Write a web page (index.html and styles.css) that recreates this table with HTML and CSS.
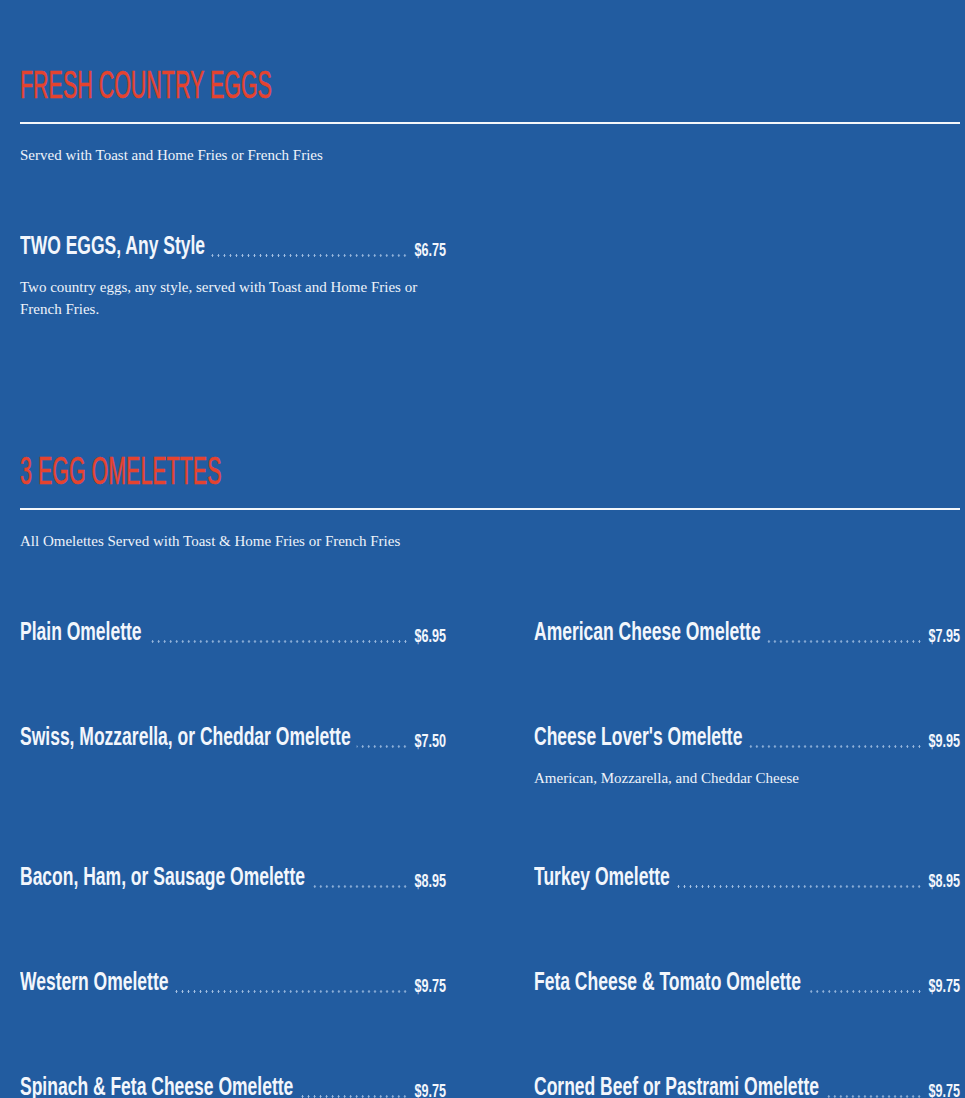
FILE: index.html
```html
<!DOCTYPE html>
<html lang="en">
<head>
<meta charset="utf-8">
<title>Menu</title>
<link rel="stylesheet" href="styles.css">
</head>
<body>
<main class="menu">
  <section class="menu-section">
    <h2 class="section-title">FRESH COUNTRY EGGS</h2>
    <div class="rule"></div>
    <p class="intro">Served with Toast and Home Fries or French Fries</p>
    <div class="items">
      <div class="item item--described">
        <div class="item-head"><span class="item-name">TWO EGGS, Any Style</span><span class="leader"></span><span class="price">$6.75</span></div>
        <p class="item-desc">Two country eggs, any style, served with Toast and Home Fries or French Fries.</p>
      </div>
    </div>
  </section>
  <section class="menu-section">
    <h2 class="section-title">3 EGG OMELETTES</h2>
    <div class="rule"></div>
    <p class="intro">All Omelettes Served with Toast &amp; Home Fries or French Fries</p>
    <div class="items">
      <div class="item">
        <div class="item-head"><span class="item-name">Plain Omelette</span><span class="leader"></span><span class="price">$6.95</span></div>
      </div>
      <div class="item">
        <div class="item-head"><span class="item-name">American Cheese Omelette</span><span class="leader"></span><span class="price">$7.95</span></div>
      </div>
      <div class="item">
        <div class="item-head"><span class="item-name">Swiss, Mozzarella, or Cheddar Omelette</span><span class="leader"></span><span class="price">$7.50</span></div>
      </div>
      <div class="item item--described">
        <div class="item-head"><span class="item-name">Cheese Lover's Omelette</span><span class="leader"></span><span class="price">$9.95</span></div>
        <p class="item-desc">American, Mozzarella, and Cheddar Cheese</p>
      </div>
      <div class="item">
        <div class="item-head"><span class="item-name">Bacon, Ham, or Sausage Omelette</span><span class="leader"></span><span class="price">$8.95</span></div>
      </div>
      <div class="item">
        <div class="item-head"><span class="item-name">Turkey Omelette</span><span class="leader"></span><span class="price">$8.95</span></div>
      </div>
      <div class="item">
        <div class="item-head"><span class="item-name">Western Omelette</span><span class="leader"></span><span class="price">$9.75</span></div>
      </div>
      <div class="item">
        <div class="item-head"><span class="item-name">Feta Cheese &amp; Tomato Omelette</span><span class="leader"></span><span class="price">$9.75</span></div>
      </div>
      <div class="item">
        <div class="item-head"><span class="item-name">Spinach &amp; Feta Cheese Omelette</span><span class="leader"></span><span class="price">$9.75</span></div>
      </div>
      <div class="item">
        <div class="item-head"><span class="item-name">Corned Beef or Pastrami Omelette</span><span class="leader"></span><span class="price">$9.75</span></div>
      </div>
    </div>
  </section>
</main>
</body>
</html>
```

FILE: styles.css
```css
html, body {
  margin: 0;
  padding: 0;
  background: #225ca0;
  overflow-x: hidden;
}

.menu {
  padding: 6px 5px 0 20px;
}

/* Headings use a wide sans squeezed horizontally to imitate a condensed face */
.section-title {
  margin: 56px 0 0;
  font-family: "Liberation Sans", Arial, sans-serif;
  font-weight: 400;
  font-size: 39px;
  line-height: 46px;
  color: #e5432f;
  white-space: nowrap;
  transform: scaleX(0.55);
  transform-origin: left center;
  -webkit-text-stroke: 0.6px #e5432f;
}

.rule {
  height: 2px;
  margin-top: 14px;
  background: #f4f7fb;
}

.intro {
  margin: 20px 0 64px;
  font-family: "Liberation Serif", "Times New Roman", serif;
  font-size: 15px;
  line-height: 22px;
  color: #eef3fa;
}

.items {
  display: grid;
  grid-template-columns: minmax(0, 1fr) minmax(0, 1fr);
  column-gap: 88px;
}

.item {
  min-width: 0;
  margin-bottom: 75px;
}

.item--described {
  margin-bottom: 72px;
}

.item-head {
  display: flex;
  align-items: flex-end;
  width: calc(100% / 0.7);
  transform: scaleX(0.7);
  transform-origin: left center;
}

.item-name {
  font-family: "Liberation Sans", Arial, sans-serif;
  font-weight: 700;
  font-size: 25px;
  line-height: 30px;
  color: #f2f6fc;
  white-space: nowrap;
}

.leader {
  flex: 1;
  align-self: stretch;
  margin: 0 9px 0 9px;
  background-image: radial-gradient(circle, rgba(200, 220, 245, 0.8) 1px, transparent 1.5px);
  background-size: 8.6px 3px;
  background-repeat: repeat-x;
  background-position: right 0 bottom 3px;
}

.price {
  font-family: "Liberation Sans", Arial, sans-serif;
  font-weight: 700;
  font-size: 18px;
  line-height: 20px;
  color: #f2f6fc;
}

.item-desc {
  margin: 16px 0 0;
  font-family: "Liberation Serif", "Times New Roman", serif;
  font-size: 15px;
  line-height: 22px;
  color: #eef3fa;
}
```
